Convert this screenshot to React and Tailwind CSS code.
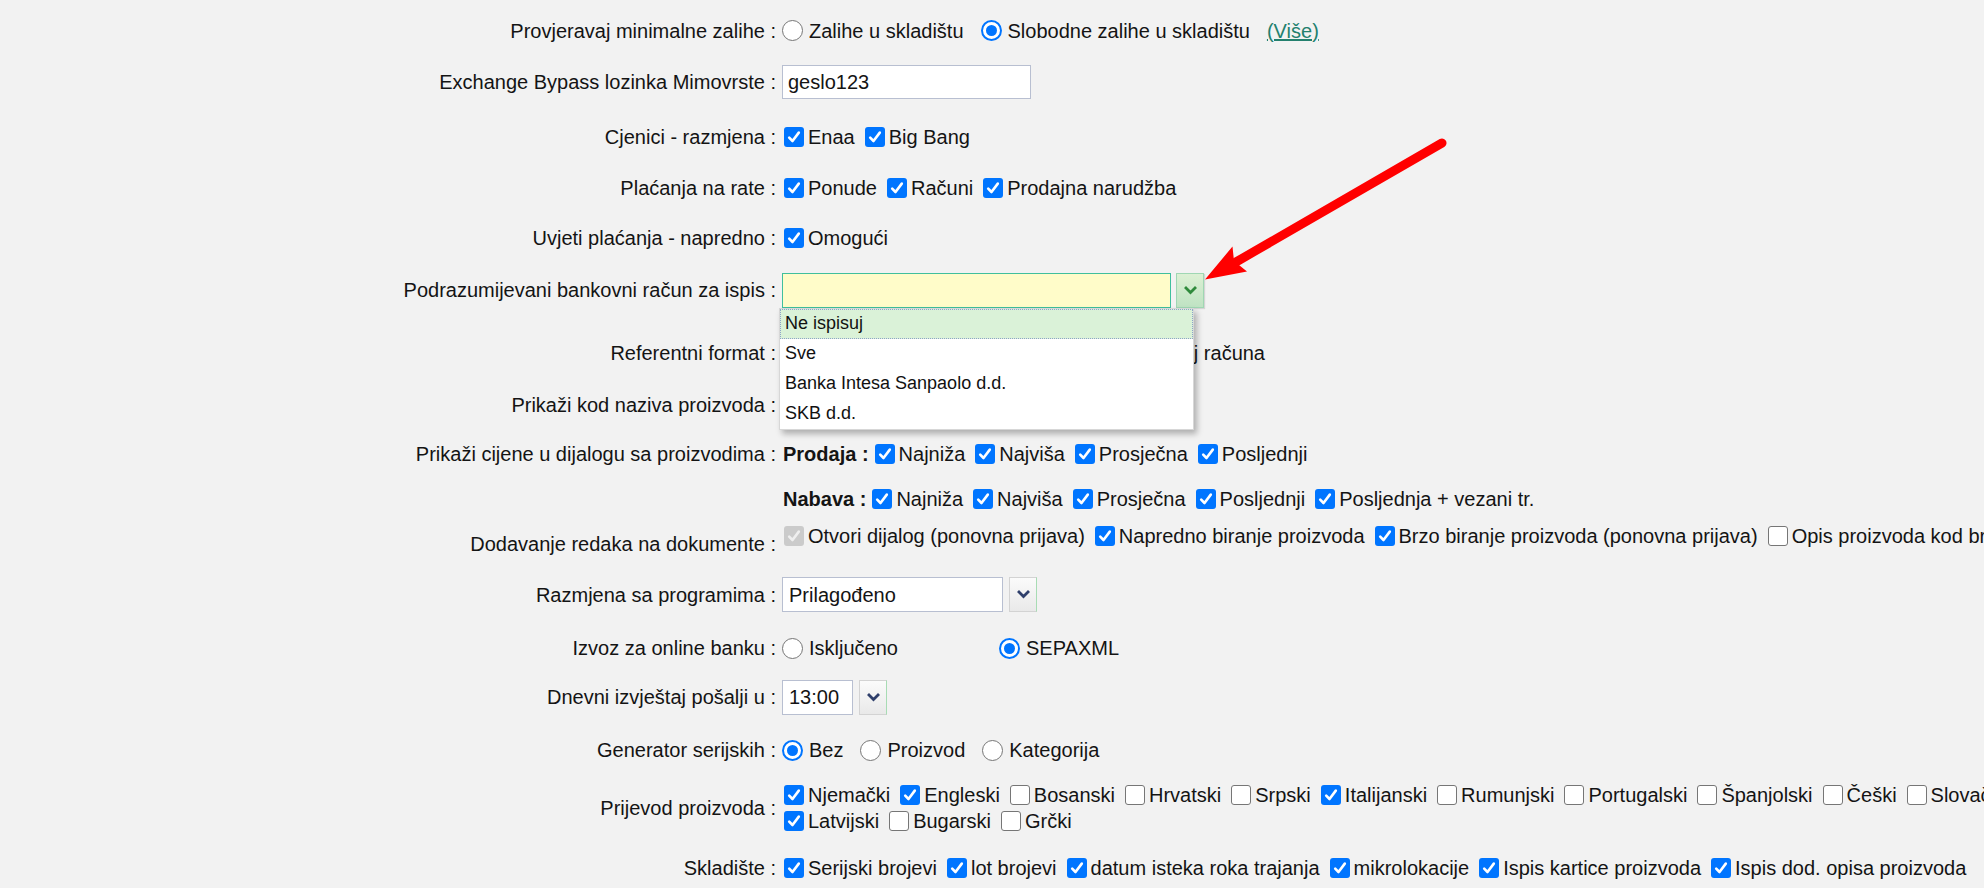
import React from 'react';

function Cb({ checked = true, disabled = false }) {
  if (!checked) {
    return (
      <span className="inline-block shrink-0 ml-[6px] mr-[4px] w-[20px] h-[20px] rounded-[3px] border-[1.5px] border-[#767676] bg-white" />
    );
  }
  return (
    <span
      className={`inline-flex shrink-0 items-center justify-center ml-[6px] mr-[4px] w-[20px] h-[20px] rounded-[3px] ${
        disabled ? 'bg-[#cbcbcb]' : 'bg-[#0075ff]'
      }`}
    >
      <svg width="14" height="14" viewBox="0 0 14 14">
        <path d="M2.2 7.6 L5.5 11 L11.8 2.6" fill="none" stroke={disabled ? '#efefef' : '#fff'} strokeWidth="2.6" strokeLinecap="round" strokeLinejoin="round" />
      </svg>
    </span>
  );
}

function Radio({ checked = false }) {
  if (checked) {
    return (
      <span className="inline-flex shrink-0 items-center justify-center ml-[4px] mr-[6px] w-[21px] h-[21px] rounded-full border-[2px] border-[#0075ff] bg-white">
        <span className="w-[11px] h-[11px] rounded-full bg-[#0075ff]" />
      </span>
    );
  }
  return <span className="inline-block shrink-0 ml-[4px] mr-[6px] w-[21px] h-[21px] rounded-full border-[1.5px] border-[#767676] bg-white" />;
}

function Opt({ checked, disabled, children }) {
  return (
    <span className="inline-flex items-center">
      <Cb checked={checked} disabled={disabled} />
      <span className="mr-[4px]">{children}</span>
    </span>
  );
}

function ROpt({ checked, children, className = '' }) {
  return (
    <span className={`inline-flex items-center ${className}`}>
      <Radio checked={checked} />
      <span>{children}</span>
    </span>
  );
}

function Chevron({ color }) {
  return (
    <svg width="13" height="9" viewBox="0 0 13 9">
      <path d="M2 2 L6.5 6.5 L11 2" fill="none" stroke={color} strokeWidth="2.8" strokeLinecap="square" />
    </svg>
  );
}

function SelectBox({ value, width }) {
  return (
    <span className="inline-flex items-center ml-[4px]">
      <span className={`flex items-center h-[35px] ${width} pl-[6px] bg-white border border-[#b8bfd1]`}>{value}</span>
      <span className="flex items-center justify-center ml-[6px] w-[28px] h-[35px] bg-gradient-to-b from-[#fbfbfb] to-[#e9e9e9] border border-[#d3d3d3] border-r-[#a8dcb4]">
        <Chevron color="#2f3f6b" />
      </span>
    </span>
  );
}

function Row({ label, className = '', labelClass = 'self-center', controlsClass = 'items-center', children }) {
  return (
    <div className={`flex ${className}`}>
      <div className={`w-[776px] shrink-0 text-right whitespace-nowrap ${labelClass}`}>{label}</div>
      <div className={`flex pl-[2px] whitespace-nowrap ${controlsClass}`}>{children}</div>
    </div>
  );
}

const banks = ['Ne ispisuj', 'Sve', 'Banka Intesa Sanpaolo d.d.', 'SKB d.d.'];

export default function App() {
  return (
    <div className="relative w-[1984px] h-[888px] overflow-hidden bg-[#f2f2f2] text-[20px] text-[#141414] font-['Liberation_Sans',Arial,sans-serif]">
      <Row label="Provjeravaj minimalne zalihe :" className="h-[55px] pt-[6px]">
        <ROpt className="mr-[13px]">Zalihe u skladištu</ROpt>
        <ROpt checked>Slobodne zalihe u skladištu</ROpt>
        <span className="ml-[17px] text-[#23806e] underline">(Više)</span>
      </Row>

      <Row label="Exchange Bypass lozinka Mimovrste :" className="h-[53px]">
        <span className="flex items-center ml-[4px] w-[249px] h-[34px] pl-[5px] bg-white border border-[#b8bfd1]">geslo123</span>
      </Row>

      <Row label="Cjenici - razmjena :" className="h-[53px] pt-[4px]">
        <Opt checked>Enaa</Opt>
        <Opt checked>Big Bang</Opt>
      </Row>

      <Row label="Plaćanja na rate :" className="h-[51px] pt-[2px]">
        <Opt checked>Ponude</Opt>
        <Opt checked>Računi</Opt>
        <Opt checked>Prodajna narudžba</Opt>
      </Row>

      <Row label="Uvjeti plaćanja - napredno :" className="h-[51px]">
        <Opt checked>Omogući</Opt>
      </Row>

      <Row label="Podrazumijevani bankovni račun za ispis :" className="relative z-10 h-[58px] pb-[4px]">
        <span className="relative inline-flex items-center ml-[4px]">
          <span className="w-[389px] h-[35px] bg-[#fffcc9] border border-[#3fbf9d]" />
          <span className="flex items-center justify-center ml-[5px] w-[28px] h-[35px] bg-gradient-to-b from-[#dcf0d4] to-[#bfe3c3] border border-[#9fd7b3] shadow-[1px_1px_1px_rgba(0,0,0,0.12)]">
            <Chevron color="#2f8a3c" />
          </span>
          <div className="absolute left-[-3px] top-full w-[415px] bg-white border border-[#d7d7d7] shadow-[3px_4px_6px_rgba(0,0,0,0.28)] text-[18px] text-[#111]">
            {banks.map((b, i) => (
              <div
                key={b}
                className={`flex items-center h-[30px] pl-[4px] ${
                  i === 0 ? 'bg-[#daf2d8] border border-dotted border-[#8ea3c8]' : 'border border-transparent'
                }`}
              >
                {b}
              </div>
            ))}
          </div>
        </span>
      </Row>

      <Row label="Referentni format :" className="h-[58px] pt-[6px]">
        <span className="w-[487px] text-right">Model HR00 - poziv na broj računa</span>
      </Row>

      <Row label="Prikaži kod naziva proizvoda :" className="h-[51px]">
        <Opt checked>Omogući</Opt>
      </Row>

      <Row label="Prikaži cijene u dijalogu sa proizvodima :" className="h-[47px]">
        <span className="ml-[5px] font-bold">Prodaja :</span>
        <Opt checked>Najniža</Opt>
        <Opt checked>Najviša</Opt>
        <Opt checked>Prosječna</Opt>
        <Opt checked>Posljednji</Opt>
      </Row>

      <Row label="" className="h-[43px]">
        <span className="ml-[5px] font-bold">Nabava :</span>
        <Opt checked>Najniža</Opt>
        <Opt checked>Najviša</Opt>
        <Opt checked>Prosječna</Opt>
        <Opt checked>Posljednji</Opt>
        <Opt checked>Posljednja + vezani tr.</Opt>
      </Row>

      <Row label="Dodavanje redaka na dokumente :" className="h-[48px]" controlsClass="items-center self-start pt-[4px] h-[28px]">
        <Opt checked disabled>Otvori dijalog (ponovna prijava)</Opt>
        <Opt checked>Napredno biranje proizvoda</Opt>
        <Opt checked>Brzo biranje proizvoda (ponovna prijava)</Opt>
        <Opt checked={false}>Opis proizvoda kod brzog biranja</Opt>
      </Row>

      <Row label="Razmjena sa programima :" className="h-[53px]">
        <SelectBox value="Prilagođeno" width="w-[221px]" />
      </Row>

      <Row label="Izvoz za online banku :" className="h-[51px] pt-[3px]">
        <ROpt className="w-[217px]">Isključeno</ROpt>
        <ROpt checked>SEPAXML</ROpt>
      </Row>

      <Row label="Dnevni izvještaj pošalji u :" className="h-[50px]">
        <SelectBox value="13:00" width="w-[71px]" />
      </Row>

      <Row label="Generator serijskih :" className="h-[56px]">
        <ROpt checked className="mr-[13px]">Bez</ROpt>
        <ROpt className="mr-[13px]">Proizvod</ROpt>
        <ROpt>Kategorija</ROpt>
      </Row>

      <Row label="Prijevod proizvoda :" className="h-[60px]" controlsClass="flex-col items-start justify-center leading-[26px]">
        <div className="flex items-center">
          <Opt checked>Njemački</Opt>
          <Opt checked>Engleski</Opt>
          <Opt checked={false}>Bosanski</Opt>
          <Opt checked={false}>Hrvatski</Opt>
          <Opt checked={false}>Srpski</Opt>
          <Opt checked>Italijanski</Opt>
          <Opt checked={false}>Rumunjski</Opt>
          <Opt checked={false}>Portugalski</Opt>
          <Opt checked={false}>Španjolski</Opt>
          <Opt checked={false}>Češki</Opt>
          <Opt checked={false}>Slovački</Opt>
          <Opt checked={false}>Slovenski</Opt>
        </div>
        <div className="flex items-center">
          <Opt checked>Latvijski</Opt>
          <Opt checked={false}>Bugarski</Opt>
          <Opt checked={false}>Grčki</Opt>
        </div>
      </Row>

      <Row label="Skladište :" className="h-[60px]">
        <Opt checked>Serijski brojevi</Opt>
        <Opt checked>lot brojevi</Opt>
        <Opt checked>datum isteka roka trajanja</Opt>
        <Opt checked>mikrolokacije</Opt>
        <Opt checked>Ispis kartice proizvoda</Opt>
        <Opt checked>Ispis dod. opisa proizvoda</Opt>
      </Row>

      {/* red pointer arrow drawn over the page */}
      <svg className="absolute left-0 top-0 z-20 pointer-events-none" width="1984" height="888">
        <line x1="1442" y1="143" x2="1236" y2="262" stroke="#ff0000" strokeWidth="9" strokeLinecap="round" />
        <path d="M1205 279.5 L1232.5 246.5 L1234 261 L1247 271.5 Z" fill="#ff0000" />
      </svg>
    </div>
  );
}
